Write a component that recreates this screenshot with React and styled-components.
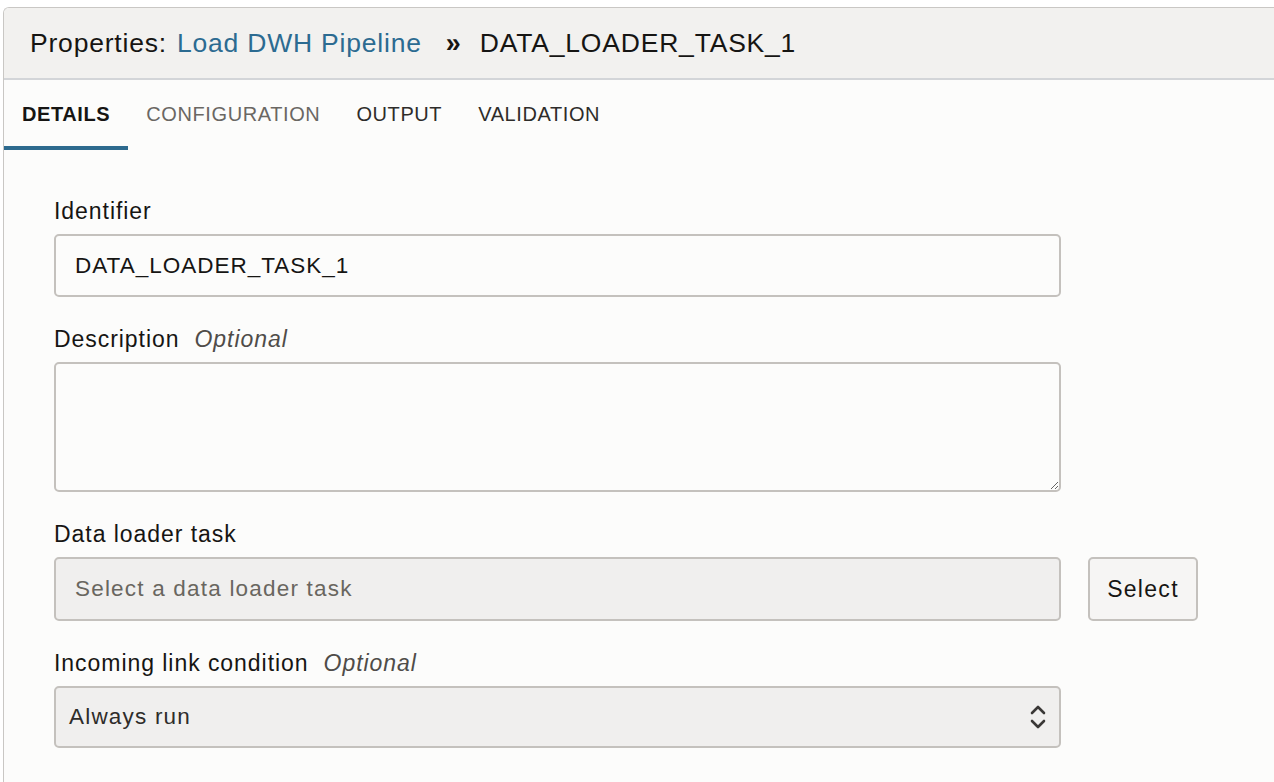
import React from 'react'
import styled, { createGlobalStyle } from 'styled-components'

const GlobalStyle = createGlobalStyle`
  html, body {
    margin: 0;
    padding: 0;
    background: #ffffff;
    overflow: hidden;
  }
  body {
    font-family: "Liberation Sans", Arial, sans-serif;
    color: #161513;
  }
  * { box-sizing: border-box; }
`

const Panel = styled.div`
  margin: 7px 0 0 3px;
  width: 1300px;
  height: 800px;
  border: 1px solid #c9c7c4;
  border-right: none;
  border-radius: 6px 0 0 0;
  background: #fcfcfb;
  overflow: hidden;
`

const Header = styled.div`
  height: 72px;
  display: flex;
  align-items: center;
  padding-left: 26px;
  background: #f2f1ef;
  border-bottom: 2px solid #d3d5d8;
  font-size: 26.5px;
  letter-spacing: 0.8px;
  color: #161513;
`

const Crumb = styled.a`
  color: #2c6b91;
  text-decoration: none;
  margin-left: 10px;
`

const Separator = styled.span`
  margin: 0 19px 0 24px;
  font-size: 27px;
  font-weight: bold;
  letter-spacing: 0;
`

const Tabs = styled.div`
  display: flex;
  height: 70px;
`

const Tab = styled.div`
  display: flex;
  align-items: center;
  padding: 2px 18px 0;
  font-size: 20px;
  letter-spacing: 0.6px;
  font-weight: ${p => (p.$active ? 'bold' : 'normal')};
  color: ${p => (p.$active ? '#161513' : p.$muted ? '#6a6763' : '#2e2c2a')};
  border-bottom: 4px solid ${p => (p.$active ? '#2d6a8e' : 'transparent')};
`

const Form = styled.div`
  padding: 47px 0 0 50px;
  display: flex;
  flex-direction: column;
  gap: 28px;
`

const Field = styled.div`
  display: flex;
  flex-direction: column;
  gap: 9px;
`

const Label = styled.label`
  font-size: 23px;
  line-height: 28px;
  letter-spacing: 0.95px;
  color: #161513;
`

const Optional = styled.span`
  font-style: italic;
  color: #4f4c49;
  margin-left: 15px;
`

const Row = styled.div`
  display: flex;
  gap: 27px;
`

const TextInput = styled.input`
  width: 1007px;
  height: ${p => p.$h || 63}px;
  padding: 0 19px;
  font-family: inherit;
  font-size: 22.5px;
  letter-spacing: ${p => (p.disabled ? 1.2 : 1)}px;
  color: #161513;
  background: ${p => (p.disabled ? '#f0efee' : '#fcfcfb')};
  border: 2px solid #c4c1bd;
  border-radius: 5px;
  outline: none;
  &::placeholder { color: #69665f; }
`

const TextArea = styled.textarea`
  width: 1007px;
  height: 130px;
  padding: 12px 19px;
  font-family: inherit;
  font-size: 22px;
  background: #fcfcfb;
  border: 2px solid #c4c1bd;
  border-radius: 5px;
  resize: vertical;
  outline: none;
`

const Button = styled.button`
  width: 110px;
  height: 64px;
  padding: 0;
  font-family: inherit;
  font-size: 23px;
  letter-spacing: 1.3px;
  color: #161513;
  background: #f6f5f4;
  border: 2px solid #c4c1bd;
  border-radius: 5px;
`

const SelectBox = styled.div`
  width: 1007px;
  height: 62px;
  display: flex;
  align-items: center;
  justify-content: space-between;
  padding: 0 12px 0 13px;
  font-size: 22.5px;
  letter-spacing: 1.2px;
  color: #2e2c2a;
  background: #f0efee;
  border: 2px solid #c4c1bd;
  border-radius: 5px;
`

const Chevrons = () => (
  <svg width="18" height="28" viewBox="0 0 18 28" fill="none" stroke="#3a3836" strokeWidth="2.6" strokeLinecap="round" strokeLinejoin="round">
    <path d="M3 10 L9 4 L15 10" />
    <path d="M3 18 L9 24 L15 18" />
  </svg>
)

export default function App() {
  return (
    <>
      <GlobalStyle />
      <Panel>
        <Header>
          Properties:<Crumb href="#">Load DWH Pipeline</Crumb>
          <Separator>»</Separator>
          DATA_LOADER_TASK_1
        </Header>
        <Tabs>
          <Tab $active>DETAILS</Tab>
          <Tab $muted>CONFIGURATION</Tab>
          <Tab>OUTPUT</Tab>
          <Tab>VALIDATION</Tab>
        </Tabs>
        <Form>
          <Field>
            <Label>Identifier</Label>
            <TextInput defaultValue="DATA_LOADER_TASK_1" />
          </Field>
          <Field>
            <Label>Description<Optional>Optional</Optional></Label>
            <TextArea />
          </Field>
          <Field>
            <Label>Data loader task</Label>
            <Row>
              <TextInput disabled $h={64} placeholder="Select a data loader task" />
              <Button>Select</Button>
            </Row>
          </Field>
          <Field>
            <Label>Incoming link condition<Optional>Optional</Optional></Label>
            <SelectBox>
              Always run
              <Chevrons />
            </SelectBox>
          </Field>
        </Form>
      </Panel>
    </>
  )
}
